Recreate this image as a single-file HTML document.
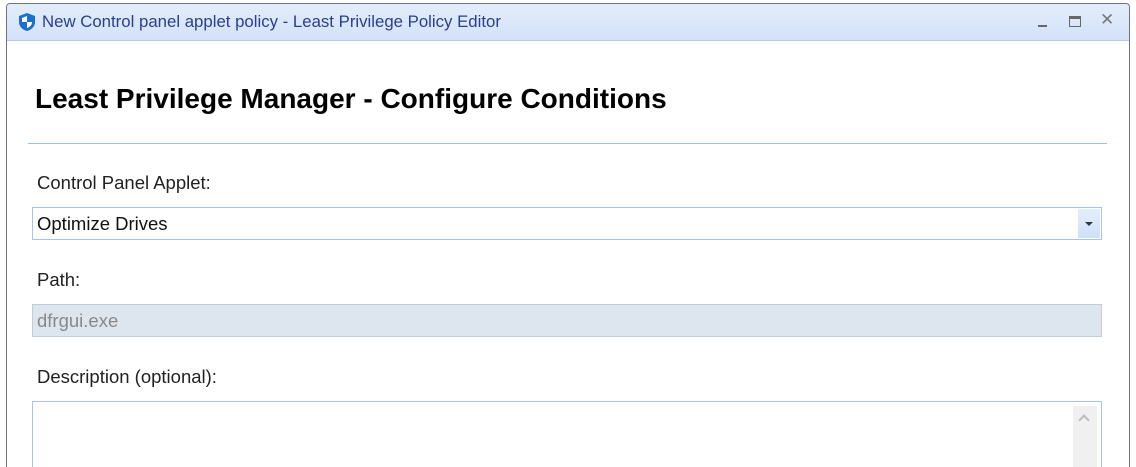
<!DOCTYPE html>
<html><head><style>
html,body{margin:0;width:1136px;height:467px;overflow:hidden}
body{background:#fff;position:relative;font-family:"Liberation Sans",sans-serif}
.frame{position:absolute;left:6px;top:3px;width:1122px;height:470px;border:1px solid #6a7480;border-bottom:none;border-radius:4px 4px 0 0;background:#fff;overflow:hidden}
.title{position:absolute;left:0;top:0;right:0;height:36px;background:linear-gradient(#e3edfb,#d3e2f8);border-bottom:1px solid #b5cbe8}
.title span{position:absolute;left:35px;top:8px;font-size:16.8px;color:#2a3f8e}
.abs{position:absolute}
.lbl{position:absolute;left:37px;font-size:18.5px;color:#222}
.box{position:absolute;left:32px;width:1068px;border:1px solid #a9c4ec;height:31px;overflow:hidden}
</style></head><body>
<div class="frame">
<div class="title">
<svg class="abs" style="left:10px;top:8px" width="20" height="20" viewBox="0 0 20 20"><path d="M10 1 L18 4 V10 C18 15 14 18 10 19 C6 18 2 15 2 10 V4 Z" fill="#1a6fd0"/><path d="M10 4 V10 H5 V6 Z M10 10 H15 C15 13 13 15 10 16 Z" fill="#fff"/></svg>
<span>New Control panel applet policy - Least Privilege Policy Editor</span>
<div class="abs" style="left:1031px;top:21px;width:9px;height:2px;background:#666"></div>
<div class="abs" style="left:1062px;top:12px;width:10px;height:7px;border:1px solid #666;border-top-width:3px"></div>
<div class="abs" style="left:1093px;top:6px;font-size:17px;color:#777">✕</div>
</div>
</div>
<div class="abs" style="left:35px;top:83px;font-size:28px;font-weight:bold;color:#000">Least Privilege Manager - Configure Conditions</div>
<div class="abs" style="left:28px;top:143px;width:1079px;height:1px;background:#9fbfee"></div>
<div class="lbl" style="top:172px">Control Panel Applet:</div>
<div class="box" style="top:207px"><span class="abs" style="left:4px;top:5px;font-size:18.5px;color:#111">Optimize Drives</span>
<div class="abs" style="right:1px;top:1px;width:22px;height:29px;background:linear-gradient(#e4eefc,#cfe0f7)"><div class="abs" style="left:7px;top:13px;border-left:4px solid transparent;border-right:4px solid transparent;border-top:4px solid #334"></div></div></div>
<div class="lbl" style="top:269px">Path:</div>
<div class="box" style="top:304px;background:#dde6ef;border-color:#c4ccd4"><span class="abs" style="left:4px;top:5px;font-size:18.5px;color:#888">dfrgui.exe</span></div>
<div class="lbl" style="top:366px">Description (optional):</div>
<div class="box" style="top:401px;height:80px"><div class="abs" style="right:4px;top:4px;width:24px;height:80px;background:#f0f0f0"><div class="abs" style="left:7px;top:10px;width:6px;height:6px;border-left:2px solid #bbb;border-top:2px solid #bbb;transform:rotate(45deg)"></div></div></div>
</body></html>
